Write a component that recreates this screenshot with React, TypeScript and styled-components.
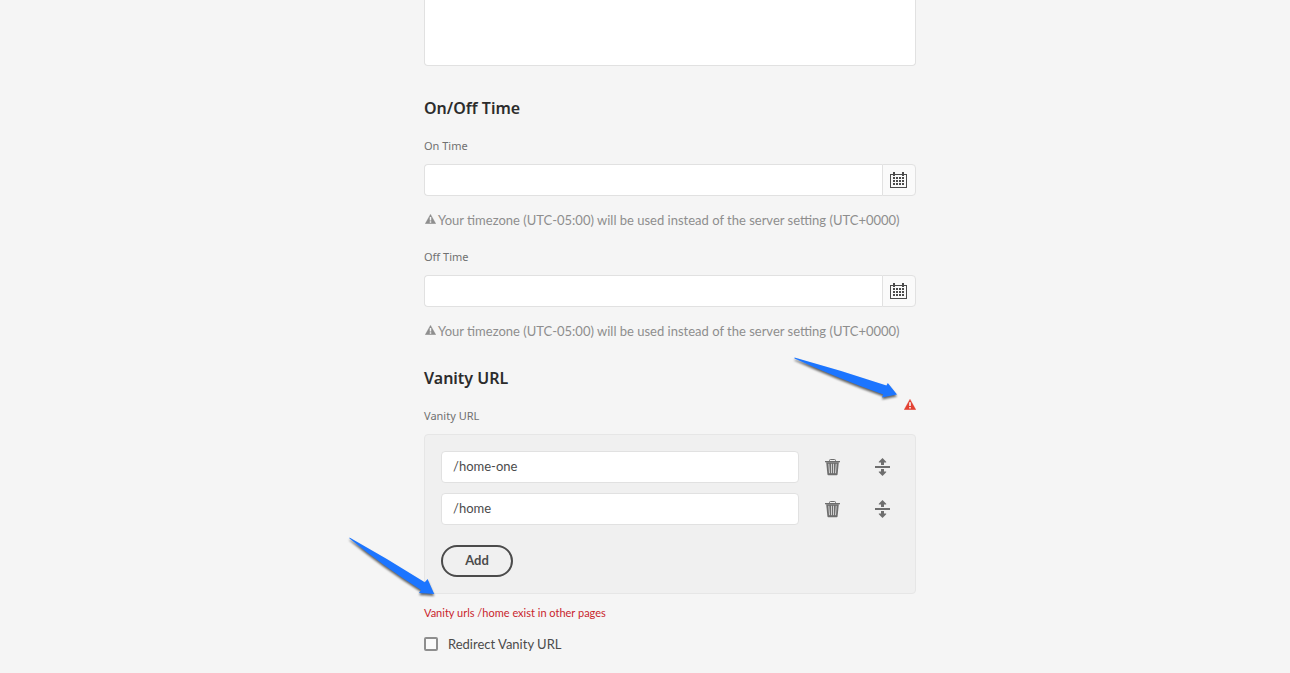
import React, { useState } from "react";
import styled, { createGlobalStyle, css } from "styled-components";

const GlobalStyle = createGlobalStyle`
  * { box-sizing: border-box; }
  body {
    margin: 0;
    background: #f5f5f5;
    color: #4b4b4b;
    font-family: Lato, "Noto Sans", sans-serif;
    font-size: 13px;
    line-height: 20px;
  }
  input, textarea, button { font: inherit; color: inherit; }
  svg { flex: none; }
`;

const Page = styled.main`
  padding: 0 0 19px 50px;
`;

const Form = styled.form`
  max-width: 492px;
  margin: 0 auto;
`;

const boxed = css`
  border: 1px solid #e1e1e1;
  border-radius: 4px;
  background: #fff;
  outline: none;
`;

const Description = styled.textarea`
  ${boxed}
  display: block;
  width: 100%;
  height: 66px;
  border-top: 0;
  border-radius: 0 0 4px 4px;
  resize: none;
`;

const Heading = styled.h3<{ $first?: boolean }>`
  margin: ${(p) => (p.$first ? "30px 0 16px" : "25px 0 8px")};
  color: #2c2c2c;
  font-family: "Noto Sans", sans-serif;
  font-size: 16px;
  line-height: 24px;
  font-weight: 600;
`;

const FieldLabel = styled.label`
  display: block;
  color: #707070;
  font-family: "Noto Sans", sans-serif;
  font-size: 11px;
`;

const Field = styled.div`
  & + & { margin-top: 17px; }
`;

const DateGroup = styled.div`
  display: flex;
  height: 32px;
  margin-top: 8px;
`;

const DateInput = styled.input`
  ${boxed}
  flex: 1;
  min-width: 0;
  padding: 0 11px;
  border-right: 0;
  border-radius: 4px 0 0 4px;
`;

const CalendarButton = styled.button`
  ${boxed}
  display: flex;
  align-items: center;
  width: 34px;
  padding: 0 7px;
  border-radius: 0 4px 4px 0;
  background: #fafafa;
  color: #4b4b4b;
`;

const Help = styled.p`
  display: flex;
  gap: 2px;
  margin: 14px 0 0;
  padding-left: 1px;
  color: #8e8e8e;
  white-space: nowrap;

  svg { margin-top: 4px; }
`;

const LabelRow = styled.div`
  display: flex;
  justify-content: space-between;
  align-items: flex-start;
  margin-bottom: 8px;

  svg { margin-top: 1px; }
  label { padding-top: 8px; }
`;

const Panel = styled.div`
  position: relative;
  padding: 16px;
  border: 1px solid #e6e6e6;
  border-radius: 4px;
  background: #f0f0f0;
`;

const Row = styled.div`
  display: flex;
  gap: 16px;
  height: 32px;
  & + & { margin-top: 10px; }
`;

const UrlInput = styled.input`
  ${boxed}
  flex: 1;
  min-width: 0;
  padding: 0 11px 2px;
`;

const IconButton = styled.button`
  display: flex;
  align-items: center;
  width: 34px;
  padding: 0 9px 0 10px;
  border: 0;
  background: none;
  color: #6e6e6e;
`;

const AddButton = styled.button`
  display: block;
  width: 72px;
  height: 32px;
  margin-top: 20px;
  padding: 0 0 2px;
  border: 2px solid #4b4b4b;
  border-radius: 16px;
  background: none;
  font-weight: 700;
`;

const ErrorText = styled.p`
  margin: 9px 0 11px;
  color: #c9252d;
  font-size: 11px;
`;

const CheckLabel = styled.label`
  display: flex;
  align-items: center;
  gap: 10px;
`;

const Checkbox = styled.input`
  appearance: none;
  width: 14px;
  height: 14px;
  margin: 0;
  border: 2px solid #8e8e8e;
  border-radius: 2px;
  background: #fafafa;
  &:checked { background: #8e8e8e; }
`;

const Arrow = styled.svg<{ $left: number; $top: number }>`
  position: absolute;
  left: ${(p) => p.$left}px;
  top: ${(p) => p.$top}px;
  overflow: visible;
  pointer-events: none;
  filter: drop-shadow(0 2px 1px rgba(0, 0, 0, 0.6));
`;

const CalendarIcon = () => (
  <svg width="17" height="16" viewBox="0 0 17 16" fill="currentColor" aria-hidden="true">
    <rect x="0.5" y="2.5" width="16" height="13" fill="none" stroke="currentColor" />
    <path d="M3 0h2v4H3zM12 0h2v4h-2z" />
    {[5, 8, 11].map((y) =>
      [3, 6, 9, 12].map((x) => <rect key={`${x}-${y}`} x={x} y={y} width="2" height="2" />)
    )}
  </svg>
);

const AlertIcon = ({ size, color }: { size: number; color: string }) => (
  <svg width={size} height={size - 1} viewBox="0 0 12 11" aria-hidden="true">
    <path d="M6 0.2 L11.9 10.8 H0.1 Z" fill={color} stroke={color} strokeWidth="0.3" strokeLinejoin="round" />
    <path d="M5.2 3.2h1.6v3.9H5.2zM5.2 8h1.6v1.6H5.2z" fill="#f5f5f5" />
  </svg>
);

const TrashIcon = () => (
  <svg width="15" height="17" viewBox="0 0 15 17" fill="none" aria-hidden="true">
    <path d="M4.5 2.5V1.4Q4.5 0.5 5.4 0.5H9.6Q10.5 0.5 10.5 1.4V2.5" stroke="currentColor" />
    <path d="M0 2h15v1.3H0z" fill="currentColor" />
    <path d="M1.2 3.3h12.6l-1.2 12q-.1.9-.9.9H3.3q-.8 0-.9-.9z" fill="currentColor" />
    <path d="M3.8 4.8 4.5 14.2M6.5 4.8V14.2M8.5 4.8V14.2M11.2 4.8 10.5 14.2" stroke="#dcdcdc" strokeWidth="0.9" />
  </svg>
);

const MoveIcon = () => (
  <svg width="15" height="18" viewBox="0 0 15 18" fill="currentColor" aria-hidden="true">
    <path d="M0 8h15v2H0z" />
    <path d="M7.5 0 11.2 3.8V4.6H9V7H6V4.6H3.8V3.8z" />
    <path d="M7.5 18 11.2 14.2V13.4H9V11H6v2.4H3.8v.8z" />
  </svg>
);

const TimeField = ({ id, label }: { id: string; label: string }) => (
  <Field>
    <FieldLabel htmlFor={id}>{label}</FieldLabel>
    <DateGroup>
      <DateInput id={id} type="text" aria-describedby={`${id}-help`} />
      <CalendarButton type="button" aria-label={`Choose ${label}`}>
        <CalendarIcon />
      </CalendarButton>
    </DateGroup>
    <Help id={`${id}-help`}>
      <AlertIcon size={11} color="#8e8e8e" />
      Your timezone (UTC-05:00) will be used instead of the server setting (UTC+0000)
    </Help>
  </Field>
);

export default function App() {
  const [urls, setUrls] = useState(["/home-one", "/home"]);

  return (
    <>
      <GlobalStyle />
      <Page>
        <Form>
          <Description aria-label="Description" />

          <Heading $first>On/Off Time</Heading>
          <TimeField id="on-time" label="On Time" />
          <TimeField id="off-time" label="Off Time" />

          <Heading>Vanity URL</Heading>
          <LabelRow>
            <FieldLabel htmlFor="vanity-0">Vanity URL</FieldLabel>
            <AlertIcon size={12} color="#e34132" />
          </LabelRow>
          <Panel>
            {urls.map((url, i) => (
              <Row key={i}>
                <UrlInput
                  id={`vanity-${i}`}
                  aria-label={`Vanity URL ${i + 1}`}
                  value={url}
                  onChange={(e) => setUrls(urls.map((u, n) => (n === i ? e.target.value : u)))}
                />
                <IconButton
                  type="button"
                  aria-label="Delete"
                  onClick={() => setUrls(urls.filter((_, n) => n !== i))}
                >
                  <TrashIcon />
                </IconButton>
                <IconButton type="button" aria-label="Reorder">
                  <MoveIcon />
                </IconButton>
              </Row>
            ))}
            <AddButton type="button" onClick={() => setUrls([...urls, ""])}>
              Add
            </AddButton>
            <Arrow $left={369} $top={-78} width="104" height="42" viewBox="0 0 104 42" aria-hidden="true">
              <path d="M0.5 0.5 Q46 13 92.5 28.5 L93.8 26 L103 37.5 L88 40.5 L89.2 37.5 Q43 21 0.5 1.5 Z" fill="#1c75ff" />
            </Arrow>
            <Arrow $left={-76} $top={102} width="86" height="58" viewBox="0 0 86 58" aria-hidden="true">
              <path d="M0.5 0.5 Q39 22 75.8 45.2 L78.6 42 L85.2 57 L70 56 L72 53 Q34 29 0.5 1.5 Z" fill="#1c75ff" />
            </Arrow>
          </Panel>
          <ErrorText role="alert">Vanity urls /home exist in other pages</ErrorText>
          <CheckLabel>
            <Checkbox type="checkbox" />
            Redirect Vanity URL
          </CheckLabel>
        </Form>
      </Page>
    </>
  );
}
